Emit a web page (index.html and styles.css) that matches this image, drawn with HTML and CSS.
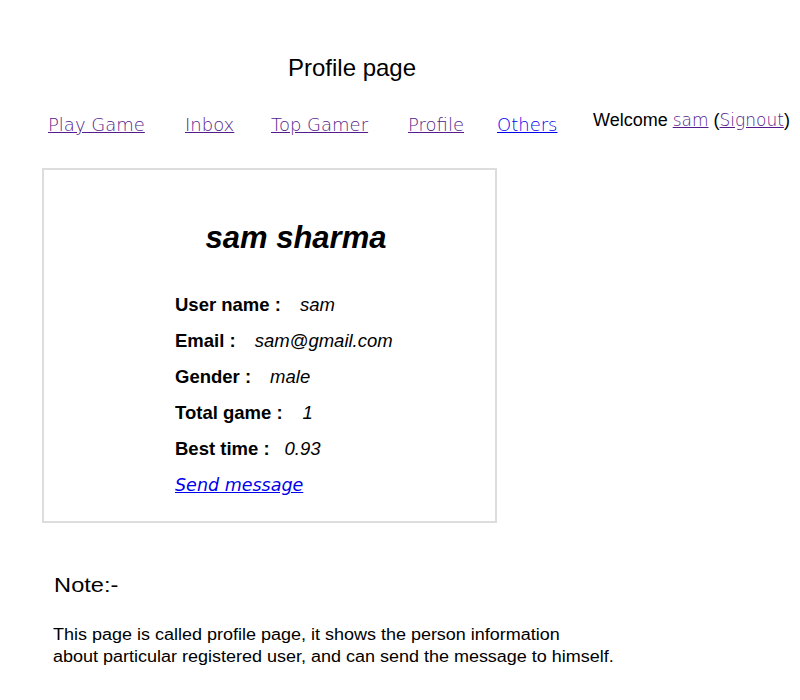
FILE: index.html
```html
<!DOCTYPE html>
<html>
<head>
<meta charset="utf-8">
<title>Profile page</title>
<link rel="stylesheet" href="styles.css">
</head>
<body>
<header class="page-header">
  <h1 class="page-title">Profile page</h1>
</header>
<nav class="menu">
  <a class="menu-link visited" href="#">Play Game</a>
  <a class="menu-link visited" href="#">Inbox</a>
  <a class="menu-link visited" href="#">Top Gamer</a>
  <a class="menu-link visited" href="#">Profile</a>
  <a class="menu-link" href="#">Others</a>
  <div class="welcome">Welcome <a class="visited" href="#">sam</a> (<a class="visited" href="#">Signout</a>)</div>
</nav>
<section class="card">
  <div class="card-inner">
    <h2 class="full-name">sam sharma</h2>
    <div class="field"><span class="label">User name :</span><span class="value v-user">sam</span></div>
    <div class="field"><span class="label">Email :</span><span class="value v-email">sam@gmail.com</span></div>
    <div class="field"><span class="label">Gender :</span><span class="value v-gender">male</span></div>
    <div class="field"><span class="label">Total game :</span><span class="value v-total">1</span></div>
    <div class="field"><span class="label">Best time :</span><span class="value v-best">0.93</span></div>
    <div class="field"><a class="send-link" href="#">Send message</a></div>
  </div>
</section>
<section class="note">
  <h3 class="note-title">Note:-</h3>
  <p class="note-text">This page is called profile page, it shows the person information<br>about particular registered user, and can send the message to himself.</p>
</section>
</body>
</html>
```
FILE: styles.css
```css
html, body {
  margin: 0;
  padding: 0;
  background: #fff;
  color: #000;
  font-family: "Liberation Sans", Arial, sans-serif;
}

.page-header {
  width: 704px;
  text-align: center;
  padding-top: 54px;
}

.page-title {
  margin: 0;
  font-size: 24px;
  font-weight: normal;
  line-height: 28px;
}

.menu {
  display: grid;
  grid-template-columns: 137px 86px 137px 89px 96px auto;
  align-items: start;
  padding-left: 48px;
  margin-top: 27px;
}

.menu-link {
  justify-self: start;
  font-family: "DejaVu Sans", sans-serif;
  font-weight: 200;
  font-size: 18px;
  line-height: 22px;
  margin-top: 5px;
  color: #0000ee;
}

.visited {
  color: #551a8b;
}

.welcome {
  font-size: 18px;
  line-height: 22px;
  white-space: nowrap;
}

.welcome a {
  font-family: "DejaVu Sans", sans-serif;
  font-weight: 200;
  font-size: 17px;
}

.card {
  margin: 32px 0 0 42px;
  width: 451px;
  height: 351px;
  border: 2px solid #dddddd;
}

.card-inner {
  width: 242px;
  margin-left: 131px;
  padding-top: 50px;
}

.full-name {
  margin: 0 0 31px 0;
  text-align: center;
  font-size: 31px;
  font-style: italic;
  font-weight: bold;
  line-height: 36px;
}

.field {
  font-size: 18.5px;
  line-height: 36px;
  white-space: nowrap;
}

.label {
  font-weight: bold;
}

.value {
  font-style: italic;
}

.v-user { margin-left: 19px; }
.v-email { margin-left: 19px; }
.v-gender { margin-left: 19px; }
.v-total { margin-left: 20px; }
.v-best { margin-left: 15px; }

.send-link {
  font-family: "DejaVu Sans", sans-serif;
  font-weight: 200;
  font-style: italic;
  font-size: 17.5px;
  color: #0000ee;
}

.note {
  width: fit-content;
  margin: 49px 0 0 53px;
  transform: scaleX(1.124);
  transform-origin: left top;
}

.note-title {
  margin: 0 0 0 1px;
  font-size: 21px;
  font-weight: normal;
  line-height: 26px;
}

.note-text {
  margin: 26px 0 0 0;
  font-size: 16px;
  line-height: 22px;
}
```
